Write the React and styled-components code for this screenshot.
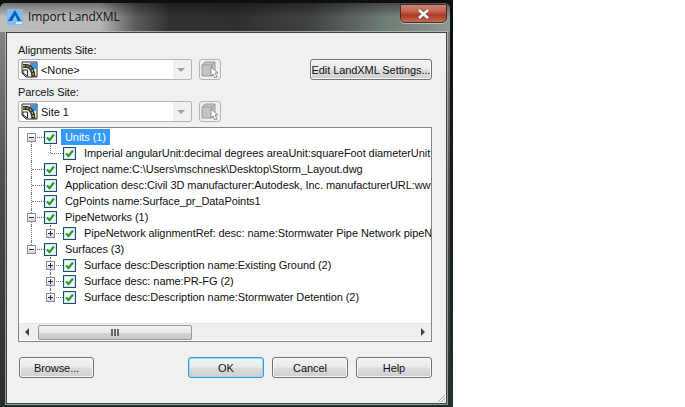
import styled, { createGlobalStyle } from "styled-components";

const GlobalStyle = createGlobalStyle`
  html, body {
    margin: 0;
    padding: 0;
    background: #fff;
    overflow: hidden;
  }
  body {
    font-family: "Liberation Sans", Arial, sans-serif;
    font-size: 11px;
    letter-spacing: -0.07px;
    color: #111;
  }
`;

const Desktop = styled.div`
  box-sizing: border-box;
  width: 453px;
  height: 407px;
  padding: 3px 3px 0 0;
  background: linear-gradient(180deg, #0d0f10 0, #1a2022 60%, #23302c 100%);
`;

const Window = styled.div`
  position: relative;
  box-sizing: border-box;
  height: 404px;
  display: flex;
  flex-direction: column;
  border-radius: 6px 6px 0 0;
  border-bottom: 2px solid #1c2a28;
  background:
    linear-gradient(180deg, rgba(0, 0, 0, 0.4) 0, rgba(0, 0, 0, 0) 14px) 0 0 / 100% 29px no-repeat,
    linear-gradient(90deg, #bdbdbd 0, #b5b5b5 100px, #5c5c5c 135px, #323232 170px, #303030 240px, #414343 310px, #6f7d75 385px, #8d9690 450px) 0 0 / 100% 29px no-repeat,
    linear-gradient(180deg, #8f8f8f 0, #4b4f4f 45%, #262d2c 100%);
`;

const TitleBar = styled.div`
  height: 29px;
  flex: none;
  display: flex;
  align-items: center;
  gap: 5px;
  padding: 0 0 2px 7px;
  box-sizing: border-box;
`;

const AppLogo = styled.svg`
  width: 16px;
  height: 16px;
  flex: none;
`;

const WindowTitle = styled.span`
  font-family: "Open Sans", sans-serif;
  font-size: 12px;
  letter-spacing: -0.1px;
  color: #111;
`;

const CloseButton = styled.div`
  position: absolute;
  top: 1px;
  right: 3px;
  width: 47px;
  height: 19px;
  box-sizing: border-box;
  display: flex;
  align-items: center;
  justify-content: center;
  border: 1px solid #4d2a25;
  border-radius: 0 0 5px 5px;
  box-shadow: 0 1px 0 rgba(255, 255, 255, 0.45);
  background: linear-gradient(180deg, #c9867a 0, #c4604e 40%, #a93a22 60%, #c26b55 100%);
`;

const Client = styled.div`
  flex: 1;
  margin: 0 0 1px 6px;
  width: 441px;
  box-sizing: border-box;
  display: flex;
  flex-direction: column;
  padding: 11px 14px 0 11px;
  background: #f0f0f0;
  border: 1px solid #3e4346;
  box-shadow: 0 0 0 1px rgba(190, 198, 198, 0.7);
  position: relative;
`;

const FieldLabel = styled.div`
  height: 14px;
  line-height: 13px;
  margin-bottom: 1px;
`;

const SiteRow = styled.div`
  display: flex;
  align-items: center;
  height: 21px;
  margin-bottom: ${(p) => p.$gap}px;
`;

const Combo = styled.div`
  width: 174px;
  height: 21px;
  box-sizing: border-box;
  display: flex;
  align-items: center;
  gap: 3px;
  padding-left: 2px;
  background: linear-gradient(90deg, #fff 0, #fff 154px, #f1f1f1 154px);
  border: 1px solid #b4b4b4;
  border-radius: 2px;
`;

const ComboText = styled.span`
  flex: 1;
  font-size: 11px;
`;

const ComboArrow = styled.span`
  width: 0;
  height: 0;
  margin-right: 6px;
  border-left: 4px solid transparent;
  border-right: 4px solid transparent;
  border-top: 4px solid #a0a0a0;
`;

const PickButton = styled.div`
  width: 22px;
  height: 21px;
  margin-left: 7px;
  box-sizing: border-box;
  display: flex;
  align-items: center;
  justify-content: center;
  border: 1px solid #b4b4b4;
  border-radius: 3px;
  background: #f0f0f0;
`;

const DialogButton = styled.button`
  box-sizing: border-box;
  width: ${(p) => p.$width}px;
  height: 21px;
  padding: 0;
  margin-left: ${(p) => p.$left || "0"};
  white-space: nowrap;
  font-family: inherit;
  font-size: 11px;
  letter-spacing: inherit;
  color: #111;
  border: 1px solid ${(p) => (p.$primary ? "#3a9bd0" : "#707070")};
  border-radius: 3px;
  background: linear-gradient(180deg, #f2f2f2 0, #ebebeb 48%, #dcdcdc 52%, #cfcfcf 100%);
  box-shadow: inset 0 0 0 1px ${(p) => (p.$primary ? "#8fdcf5" : "#f8f8f8")};
`;

const TreeBox = styled.div`
  margin-top: 5px;
  height: 215px;
  box-sizing: border-box;
  border: 1px solid #828790;
  background: #fff;
  display: flex;
  flex-direction: column;
`;

const TreeList = styled.div`
  flex: 1;
  overflow: hidden;
  padding: 1px 0 0 4px;
`;

const TreeRow = styled.div`
  display: flex;
  align-items: center;
  height: 16px;
  white-space: nowrap;
`;

const Guide = styled.div`
  position: relative;
  flex: none;
  width: 19px;
  height: 16px;
  &::before {
    content: "";
    display: ${(p) => (p.$kind === "empty" ? "none" : "block")};
    position: absolute;
    left: 8px;
    top: ${(p) => (p.$kind === "start" ? "8px" : "0")};
    height: ${(p) => {
      if (p.$kind === "elbow") return "8px";
      if (p.$kind === "start") return "8px";
      return "16px";
    }};
    border-left: 1px dotted #777;
  }
  &::after {
    content: "";
    display: ${(p) => (p.$kind === "empty" || p.$kind === "pipe" ? "none" : "block")};
    position: absolute;
    left: 9px;
    top: 8px;
    width: 12px;
    border-top: 1px dotted #777;
  }
`;

const Expander = styled.div`
  position: absolute;
  z-index: 1;
  left: 4px;
  top: 4px;
  width: 9px;
  height: 9px;
  box-sizing: border-box;
  border: 1px solid #8e8f8f;
  background: linear-gradient(180deg, #fff, #d6d6e4);
  display: flex;
  align-items: center;
  justify-content: center;
  &::before {
    content: "";
    width: 5px;
    height: 1px;
    background: #1e2f78;
  }
  &::after {
    content: "";
    display: ${(p) => (p.$open ? "none" : "block")};
    position: absolute;
    left: 3px;
    top: 1px;
    width: 1px;
    height: 5px;
    background: #1e2f78;
  }
`;

const CheckBox = styled.div`
  flex: none;
  position: relative;
  margin-left: 2px;
  width: 13px;
  height: 13px;
  box-sizing: border-box;
  border: 1px solid #1c4f78;
  background: #f4f7f4;
  box-shadow: inset 0 0 0 1px #dfe3df;
  display: flex;
  align-items: center;
  justify-content: center;
`;

const RowLabel = styled.span`
  margin-left: ${(p) => (p.$selected ? "4px" : "8px")};
  padding: ${(p) => (p.$selected ? "0 4px" : "0")};
  line-height: 16px;
  background: ${(p) => (p.$selected ? "#3399ff" : "transparent")};
  color: ${(p) => (p.$selected ? "#fff" : "#111")};
`;

const ScrollBar = styled.div`
  height: 16px;
  flex: none;
  margin-bottom: 1px;
  display: flex;
  align-items: center;
  background: #efefef;
  border-top: 1px solid #e4e4e4;
`;

const ScrollArrow = styled.span`
  flex: none;
  width: 0;
  height: 0;
  margin: ${(p) => (p.$right ? "0 6px 0 auto" : "0 5px 0 6px")};
  border-top: 4px solid transparent;
  border-bottom: 4px solid transparent;
  ${(p) => (p.$right ? "border-left: 4px solid #444;" : "border-right: 4px solid #444;")}
`;

const ScrollThumb = styled.div`
  box-sizing: border-box;
  width: 154px;
  height: 15px;
  margin-left: 4px;
  border: 1px solid #979797;
  border-radius: 2px;
  background: linear-gradient(180deg, #f3f3f3 0, #e8e8e8 50%, #d3d3d3 55%, #c8c8c8 100%);
  display: flex;
  align-items: center;
  justify-content: center;
  gap: 1px;
`;

const Grip = styled.span`
  width: 2px;
  height: 7px;
  background: #666;
`;

const Footer = styled.div`
  display: flex;
  align-items: center;
  margin-top: 15px;
  padding-left: 1px;
  gap: 8px;
`;

const ResizeGrip = styled.svg`
  position: absolute;
  right: 0;
  bottom: 0;
  width: 12px;
  height: 12px;
`;

const SiteIcon = () => (
  <svg width="17" height="17" viewBox="0 0 17 17">
    <path d="M1 1h15v15H9L5 16 1 12z" fill="#eceff2" stroke="#2a2a2a" />
    <rect x="9" y="2" width="7" height="6" fill="#3a96dc" />
    <path d="M2 5h4q6 1 6.5 11" fill="none" stroke="#333" strokeWidth="4" />
    <path d="M2 5h4q6 1 6.5 11" fill="none" stroke="#f2c81e" strokeWidth="1.2" strokeDasharray="2 1.5" />
    <path d="M2 9h4.5v6L2 12z" fill="#fff" stroke="#2a2a2a" />
  </svg>
);

const PickIcon = () => (
  <svg width="18" height="17" viewBox="0 0 18 17">
    <path d="M1 4l3-3h10v11l-3 3H1z" fill="#c4c4c4" stroke="#9a9a9a" />
    <path d="M1 4h10v11M11 4l3-3" fill="none" stroke="#9a9a9a" />
    <path d="M10 6v9l2-2 2 4 2-1-2-4h3z" fill="#fff" stroke="#8a8a8a" />
  </svg>
);

const CheckMark = () => (
  <svg width="9" height="9" viewBox="0 0 9 9">
    <path d="M1 4.5l2.5 2.5L8 1.5" fill="none" stroke="#1f9e2a" strokeWidth="2.2" />
  </svg>
);

const rows = [
  { cells: ["start"], open: true, text: "Units (1)", selected: true },
  { cells: ["pipe", "elbow"], text: "Imperial angularUnit:decimal degrees areaUnit:squareFoot diameterUnit:" },
  { cells: ["tee"], text: "Project name:C:\\Users\\mschnesk\\Desktop\\Storm_Layout.dwg" },
  { cells: ["tee"], text: "Application desc:Civil 3D manufacturer:Autodesk, Inc. manufacturerURL:www" },
  { cells: ["tee"], text: "CgPoints name:Surface_pr_DataPoints1" },
  { cells: ["tee"], open: true, text: "PipeNetworks (1)" },
  { cells: ["pipe", "elbow"], open: false, text: "PipeNetwork alignmentRef: desc: name:Stormwater Pipe Network pipeNe" },
  { cells: ["elbow"], open: true, text: "Surfaces (3)" },
  { cells: ["empty", "tee"], open: false, text: "Surface desc:Description name:Existing Ground (2)" },
  { cells: ["empty", "tee"], open: false, text: "Surface desc: name:PR-FG (2)" },
  { cells: ["empty", "elbow"], open: false, text: "Surface desc:Description name:Stormwater Detention (2)" },
];

const Row = ({ row }) => (
  <TreeRow>
    {row.cells.map((kind, i) => (
      <Guide key={i} $kind={kind}>
        {i === row.cells.length - 1 && row.open !== undefined && <Expander $open={row.open} />}
      </Guide>
    ))}
    <CheckBox>
      <CheckMark />
    </CheckBox>
    <RowLabel $selected={row.selected}>{row.text}</RowLabel>
  </TreeRow>
);

const App = () => (
  <>
    <GlobalStyle />
    <Desktop>
      <Window>
        <TitleBar>
          <AppLogo viewBox="0 0 16 16">
            <rect width="16" height="16" fill="#7dbcec" />
            <path d="M1 12L8 1l6 11h-3L8 6l-3 6z" fill="#0b5cb5" />
            <rect x="9" y="13" width="6" height="2" fill="#dfe8ef" />
          </AppLogo>
          <WindowTitle>Import LandXML</WindowTitle>
        </TitleBar>
        <CloseButton>
          <svg width="15" height="12" viewBox="0 0 15 12">
            <path d="M3 2l9 8M12 2l-9 8" stroke="#6b5a56" strokeWidth="4" />
            <path d="M3 2l9 8M12 2l-9 8" stroke="#fff" strokeWidth="2.4" />
          </svg>
        </CloseButton>
        <Client>
          <FieldLabel>Alignments Site:</FieldLabel>
          <SiteRow $gap={6}>
            <Combo>
              <SiteIcon />
              <ComboText>&lt;None&gt;</ComboText>
              <ComboArrow />
            </Combo>
            <PickButton>
              <PickIcon />
            </PickButton>
            <DialogButton $width={122} $left="auto">
              Edit LandXML Settings...
            </DialogButton>
          </SiteRow>
          <FieldLabel>Parcels Site:</FieldLabel>
          <SiteRow $gap={0}>
            <Combo>
              <SiteIcon />
              <ComboText>Site 1</ComboText>
              <ComboArrow />
            </Combo>
            <PickButton>
              <PickIcon />
            </PickButton>
          </SiteRow>
          <TreeBox>
            <TreeList>
              {rows.map((row) => (
                <Row key={row.text} row={row} />
              ))}
            </TreeList>
            <ScrollBar>
              <ScrollArrow />
              <ScrollThumb>
                <Grip />
                <Grip />
                <Grip />
              </ScrollThumb>
              <ScrollArrow $right />
            </ScrollBar>
          </TreeBox>
          <Footer>
            <DialogButton $width={75}>Browse...</DialogButton>
            <DialogButton $width={76} $left="86px" $primary>
              OK
            </DialogButton>
            <DialogButton $width={76}>Cancel</DialogButton>
            <DialogButton $width={76}>Help</DialogButton>
          </Footer>
          <ResizeGrip viewBox="0 0 12 12">
            <path d="M11 4L4 11M11 7l-4 4M11 10l-1 1" stroke="#a8a8a8" />
          </ResizeGrip>
        </Client>
      </Window>
    </Desktop>
  </>
);

export default App;
